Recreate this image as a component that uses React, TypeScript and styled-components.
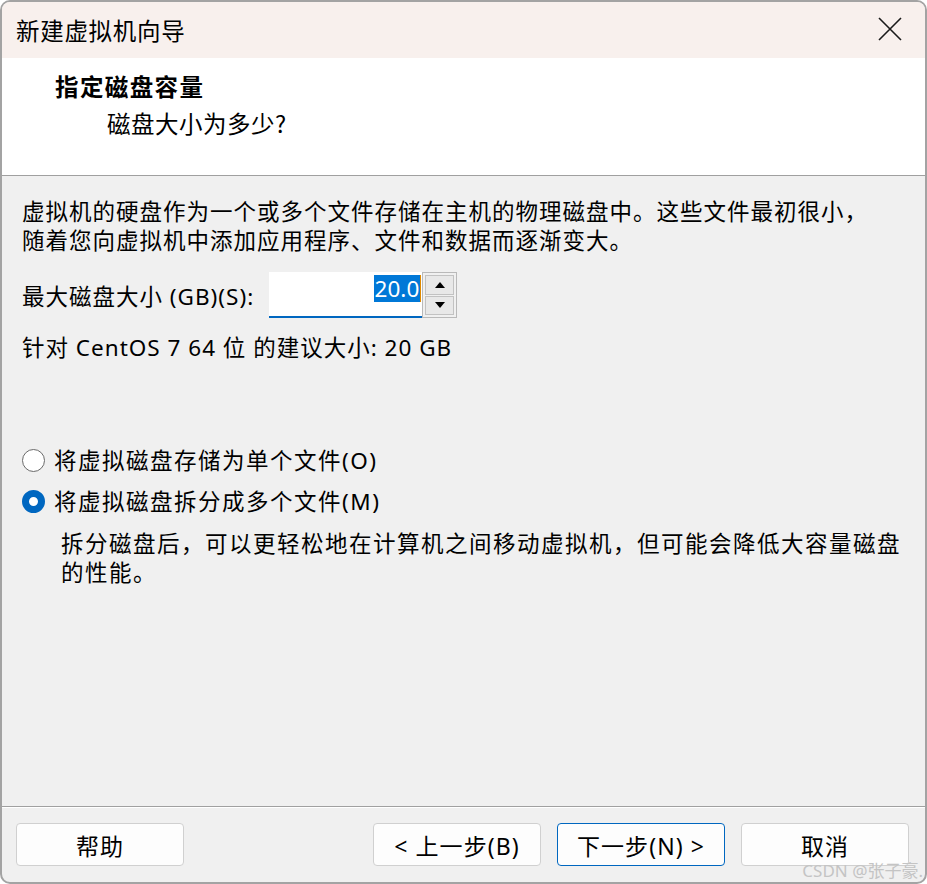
import React from "react";
import styled, { createGlobalStyle } from "styled-components";

const GlobalStyle = createGlobalStyle`
  html, body {
    margin: 0;
    padding: 0;
    background: #ffffff;
  }
  * {
    box-sizing: border-box;
  }
`;

const FONT = `"Noto Sans", "Noto Sans CJK SC", sans-serif`;

const Window = styled.div`
  position: relative;
  width: 927px;
  height: 884px;
  border: 2px solid #a3a3a3;
  border-radius: 10px;
  overflow: hidden;
  display: flex;
  flex-direction: column;
  background: #f0f0f0;
  font-family: ${FONT};
  color: #000;
`;

const TitleBar = styled.div`
  height: 56px;
  flex: none;
  display: flex;
  align-items: center;
  justify-content: space-between;
  padding: 0 20px 0 14px;
  background: #f8f0ed;
  font-size: 23.5px;
  letter-spacing: 0.7px;
  font-family: "Noto Sans CJK SC", sans-serif;
`;

const CloseButton = styled.button`
  width: 30px;
  height: 30px;
  border: none;
  background: transparent;
  padding: 0;
  margin-top: -2px;
  display: flex;
  align-items: center;
  justify-content: center;
`;

const Header = styled.div`
  height: 118px;
  flex: none;
  background: #ffffff;
  border-bottom: 1px solid #a0a0a0;
  padding: 11px 0 0 53px;
  font-family: "Noto Sans CJK SC", sans-serif;
`;

const HeaderTitle = styled.div`
  font-size: 23.5px;
  letter-spacing: 1.4px;
  font-weight: 700;
  line-height: 34px;
`;

const HeaderSub = styled.div`
  font-size: 23.5px;
  letter-spacing: 0.5px;
  line-height: 34px;
  margin: 3px 0 0 52px;
`;

const Body = styled.div`
  flex: 1;
  padding: 21px 20px 0 20px;
  font-size: 22.5px;
  letter-spacing: 1px;
`;

const Para = styled.p`
  margin: 0;
  line-height: 29px;
  white-space: nowrap;
`;

const SizeRow = styled.div`
  display: flex;
  align-items: center;
  margin-top: 17px;
  height: 46px;
`;

const SizeLabel = styled.span`
  margin-right: 15px;
`;

const SizeInput = styled.div`
  width: 153px;
  height: 46px;
  background: #ffffff;
  border-bottom: 2px solid #0067c0;
  display: flex;
  align-items: center;
  justify-content: flex-end;
  padding-right: 1px;
`;

const Selected = styled.span`
  background: #0078d7;
  color: #ffffff;
  letter-spacing: 0;
  line-height: 27px;
  padding: 0 1px;
  border-right: 1px solid #e08a00;
  margin-top: -12px;
`;

const Spinner = styled.div`
  width: 35px;
  height: 46px;
  border: 1px solid #b9b9b9;
  padding: 2px;
  display: flex;
  flex-direction: column;
  gap: 1px;
  background: #f0f0f0;
`;

const SpinButton = styled.div`
  flex: 1;
  border: 1px solid #c2c2c2;
  background: #e8e8e8;
  display: flex;
  align-items: center;
  justify-content: center;
`;

const Arrow = styled.span<{ $up?: boolean }>`
  width: 0;
  height: 0;
  border-left: 5px solid transparent;
  border-right: 5px solid transparent;
  ${(p) =>
    p.$up ? "border-bottom: 6px solid #000;" : "border-top: 6px solid #000;"}
`;

const Recommend = styled.p`
  margin: 15px 0 0;
  line-height: 29px;
`;

const RadioGroup = styled.div`
  margin-top: 84px;
  display: flex;
  flex-direction: column;
  gap: 12px;
`;

const RadioRow = styled.label`
  display: flex;
  align-items: center;
  gap: 9px;
  line-height: 29px;
  letter-spacing: 1.5px;
`;

const RadioCircle = styled.span<{ $checked?: boolean }>`
  width: 23px;
  height: 23px;
  border-radius: 50%;
  flex: none;
  ${(p) =>
    p.$checked
      ? "background: #ffffff; border: 7px solid #0067c0;"
      : "background: #ffffff; border: 1.5px solid #6a6a6a;"}
`;

const RadioNote = styled.p`
  margin: 13px 0 0 39px;
  line-height: 29px;
  letter-spacing: 1.5px;
  white-space: nowrap;
`;

const Footer = styled.div`
  height: 76px;
  flex: none;
  border-top: 1px solid #a0a0a0;
  box-shadow: inset 0 1px 0 #ffffff;
  display: flex;
  align-items: flex-start;
  padding: 16px 16px 0 14px;
`;

const Spacer = styled.div`
  flex: 1;
`;

const Button = styled.button<{ $primary?: boolean }>`
  width: 168px;
  height: 43px;
  border-radius: 4px;
  border: 1px solid ${(p) => (p.$primary ? "#0067c0" : "#d0d0d0")};
  background: #fdfdfd;
  font-family: "Noto Sans", "Noto Sans CJK SC", sans-serif;
  font-size: 23px;
  letter-spacing: 1.1px;
  color: #000;
  padding: 0;
  & + & {
    margin-left: 16px;
  }
`;

const Watermark = styled.div`
  position: absolute;
  right: 2px;
  bottom: 2px;
  font-family: "Noto Sans", "Noto Sans CJK SC", sans-serif;
  font-size: 17px;
  line-height: 18px;
  color: #c4c4c4;
  pointer-events: none;
`;

export default function App() {
  return (
    <>
      <GlobalStyle />
      <Window>
        <TitleBar>
          <span>新建虚拟机向导</span>
          <CloseButton aria-label="关闭">
            <svg width="24" height="24" viewBox="0 0 24 24">
              <path d="M1 1 L23 23 M23 1 L1 23" stroke="#1a1a1a" strokeWidth="1.6" fill="none" />
            </svg>
          </CloseButton>
        </TitleBar>
        <Header>
          <HeaderTitle>指定磁盘容量</HeaderTitle>
          <HeaderSub>磁盘大小为多少?</HeaderSub>
        </Header>
        <Body>
          <Para>
            虚拟机的硬盘作为一个或多个文件存储在主机的物理磁盘中。这些文件最初很小，
            <br />
            随着您向虚拟机中添加应用程序、文件和数据而逐渐变大。
          </Para>
          <SizeRow>
            <SizeLabel>最大磁盘大小 (GB)(S):</SizeLabel>
            <SizeInput>
              <Selected>20.0</Selected>
            </SizeInput>
            <Spinner>
              <SpinButton>
                <Arrow $up />
              </SpinButton>
              <SpinButton>
                <Arrow />
              </SpinButton>
            </Spinner>
          </SizeRow>
          <Recommend>针对 CentOS 7 64 位 的建议大小: 20 GB</Recommend>
          <RadioGroup>
            <RadioRow>
              <RadioCircle />
              <span>将虚拟磁盘存储为单个文件(O)</span>
            </RadioRow>
            <RadioRow>
              <RadioCircle $checked />
              <span>将虚拟磁盘拆分成多个文件(M)</span>
            </RadioRow>
          </RadioGroup>
          <RadioNote>
            拆分磁盘后，可以更轻松地在计算机之间移动虚拟机，但可能会降低大容量磁盘
            <br />
            的性能。
          </RadioNote>
        </Body>
        <Footer>
          <Button>帮助</Button>
          <Spacer />
          <Button>&lt; 上一步(B)</Button>
          <Button $primary>下一步(N) &gt;</Button>
          <Button>取消</Button>
        </Footer>
        <Watermark>CSDN @张子豪.</Watermark>
      </Window>
    </>
  );
}
